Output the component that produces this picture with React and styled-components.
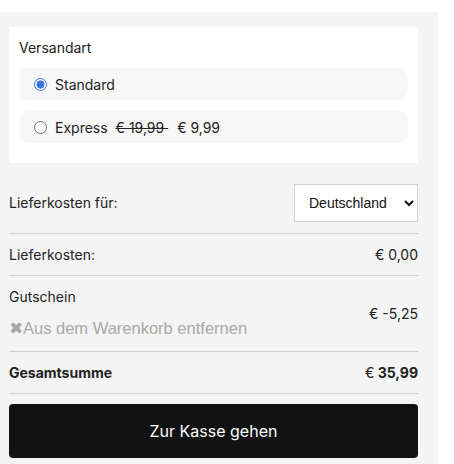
import React, { useState } from "react";
import styled, { createGlobalStyle } from "styled-components";

const GlobalStyle = createGlobalStyle`
  body {
    margin: 0;
    background: #fff;
    font-family: Inter, "Liberation Sans", sans-serif;
    color: #222;
  }
`;

const Page = styled.div`
  padding-top: 12px;
`;

const Panel = styled.div`
  width: 438px;
  box-sizing: border-box;
  background: #f4f4f4;
  padding: 15px 20px 10px 9px;
`;

const ShippingCard = styled.div`
  background: #fff;
  padding: 11px 10px 20px 10px;
`;

const CardTitle = styled.div`
  font-size: 14px;
  line-height: 20px;
  margin-bottom: 10px;
`;

const OptionList = styled.div`
  display: flex;
  flex-direction: column;
  gap: 11px;
`;

const Option = styled.label`
  display: flex;
  align-items: center;
  height: 32px;
  padding: 0 15px;
  background: #f7f7f7;
  border-radius: 10px;
  font-size: 14px;
  cursor: pointer;

  input {
    margin: 0 8px 0 0;
    width: 13px;
    height: 13px;
    accent-color: #3b74e0;
  }
`;

const OldPrice = styled.span`
  text-decoration: line-through;
  margin: 0 9px 0 8px;
  white-space: pre;
`;

const Row = styled.div`
  display: flex;
  justify-content: space-between;
  align-items: center;
  padding: ${(p) => p.$pad || "12px 0 11px"};
  border-bottom: 1px solid #cfcfcf;
  font-size: 14px;
  line-height: 18px;
`;

const Label = styled.div`
  font-weight: ${(p) => (p.$bold ? 700 : 400)};
`;

const Value = styled.div`
  font-weight: ${(p) => (p.$bold ? 700 : 400)};
`;

const Euro = styled.span`
  font-weight: 400;
`;

const CountrySelect = styled.select`
  width: 124px;
  height: 38px;
  padding: 0 6px 0 10px;
  border: 1px solid #d4d4d4;
  background: #fff;
  font-family: "Liberation Sans", Arial, sans-serif;
  font-size: 14px;
  color: #111;
`;

const CouponInfo = styled.div`
  display: flex;
  flex-direction: column;
  gap: 10px;
`;

const RemoveLink = styled.a`
  font-family: "Liberation Sans", Arial, sans-serif;
  font-size: 16.5px;
  line-height: 24px;
  color: #a8a8a8;
  text-decoration: none;
  cursor: pointer;
`;

const CheckoutButton = styled.button`
  display: block;
  width: 100%;
  height: 54px;
  margin-top: 10px;
  border: none;
  border-radius: 4px;
  background: #121212;
  color: #fff;
  font-family: Inter, "Liberation Sans", sans-serif;
  font-size: 16px;
  cursor: pointer;
`;

export default function App() {
  const [shipping, setShipping] = useState("standard");
  const [country, setCountry] = useState("DE");

  return (
    <Page>
      <GlobalStyle />
      <Panel>
        <ShippingCard>
          <CardTitle>Versandart</CardTitle>
          <OptionList>
            <Option>
              <input
                type="radio"
                name="shipping"
                checked={shipping === "standard"}
                onChange={() => setShipping("standard")}
              />
              Standard
            </Option>
            <Option>
              <input
                type="radio"
                name="shipping"
                checked={shipping === "express"}
                onChange={() => setShipping("express")}
              />
              Express
              <OldPrice>€ 19,99 </OldPrice>€ 9,99
            </Option>
          </OptionList>
        </ShippingCard>

        <Row $pad="21px 0 11px">
          <Label>Lieferkosten für:</Label>
          <CountrySelect value={country} onChange={(e) => setCountry(e.target.value)}>
            <option value="DE">Deutschland</option>
            <option value="AT">Österreich</option>
            <option value="CH">Schweiz</option>
          </CountrySelect>
        </Row>
        <Row>
          <Label>Lieferkosten:</Label>
          <Value>€ 0,00</Value>
        </Row>
        <Row $pad="12px 0 11px">
          <CouponInfo>
            <Label>Gutschein</Label>
            <RemoveLink>✖Aus dem Warenkorb entfernen</RemoveLink>
          </CouponInfo>
          <Value>€ -5,25</Value>
        </Row>
        <Row>
          <Label $bold>Gesamtsumme</Label>
          <Value $bold>
            <Euro>€</Euro> 35,99
          </Value>
        </Row>
        <CheckoutButton>Zur Kasse gehen</CheckoutButton>
      </Panel>
    </Page>
  );
}
